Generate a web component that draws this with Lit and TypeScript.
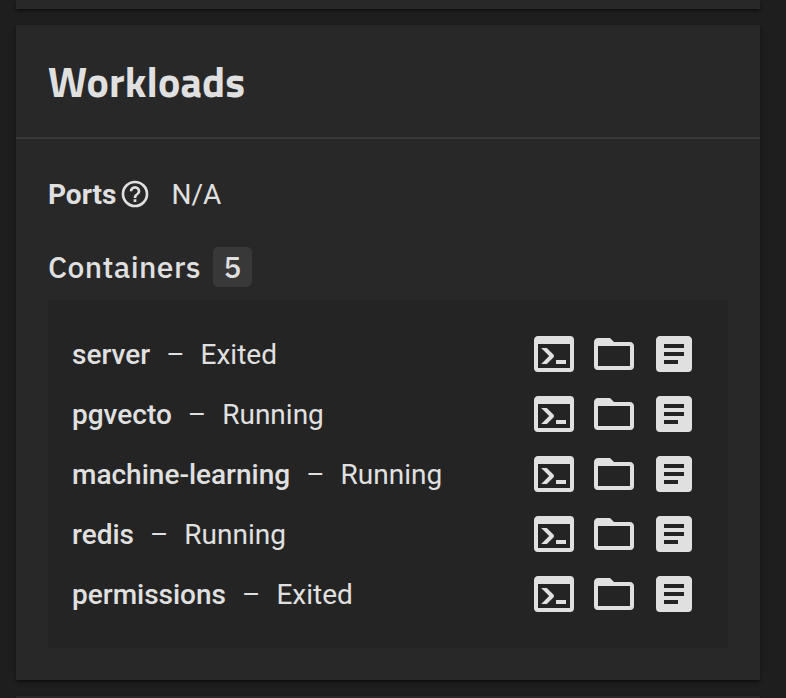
import { LitElement, html, css, svg } from "lit";
import { customElement, property } from "lit/decorators.js";

const ICONS: Record<string, string> = {
  shell:
    "M20,19V7H4V19H20M20,3A2,2 0 0,1 22,5V19A2,2 0 0,1 20,21H4A2,2 0 0,1 2,19V5C2,3.89 2.9,3 4,3H20M13,17V15H18V17H13M9.58,13L5.57,9H8.4L11.7,12.3C12.09,12.69 12.09,13.33 11.7,13.72L8.42,17H5.59L9.58,13Z",
  folder:
    "M20,18H4V8H20M20,6H12L10,4H4C2.89,4 2,4.89 2,6V18A2,2 0 0,0 4,20H20A2,2 0 0,0 22,18V8C22,6.89 21.1,6 20,6Z",
  logs:
    "M14,17H7V15H14M17,13H7V11H17M17,9H7V7H17M19,3H5C3.89,3 3,3.89 3,5V19A2,2 0 0,0 5,21H19A2,2 0 0,0 21,19V5C21,3.89 20.1,3 19,3Z",
  help:
    "M11,18H13V16H11V18M12,2A10,10 0 0,0 2,12A10,10 0 0,0 12,22A10,10 0 0,0 22,12A10,10 0 0,0 12,2M12,20C7.59,20 4,16.41 4,12C4,7.59 7.59,4 12,4C16.41,4 20,7.59 20,12C20,16.41 16.41,20 12,20M12,6A4,4 0 0,0 8,10H10A2,2 0 0,1 12,8A2,2 0 0,1 14,10C14,12 11,11.75 11,15H13C13,12.75 16,12.5 16,10A4,4 0 0,0 12,6Z",
};

@customElement("app-icon")
export class AppIcon extends LitElement {
  @property() name = "shell";
  static styles = css`
    :host { display: block; width: 48px; height: 48px; flex: none; }
    svg { display: block; width: 100%; height: 100%; fill: currentColor; }
  `;
  render() {
    return html`<svg viewBox="0 0 24 24">${svg`<path d=${ICONS[this.name]} />`}</svg>`;
  }
}

const CONTAINERS = [
  { name: "server", state: "Exited" },
  { name: "pgvecto", state: "Running" },
  { name: "machine-learning", state: "Running" },
  { name: "redis", state: "Running" },
  { name: "permissions", state: "Exited" },
];

@customElement("app-root")
export class AppRoot extends LitElement {
  static styles = css`
    :host {
      display: flex;
      flex-direction: column;
      gap: 16px;
      box-sizing: border-box;
      height: 698px;
      padding: 0 26px 0 16px;
      overflow: hidden;
      background: #1e1e1e;
      color: #e0e0e0;
      font: 28px/32px Roboto, sans-serif;
    }
    .card {
      flex: none;
      background: #282828;
      box-shadow: 0 2px 3px -1px rgba(0, 0, 0, 0.55), 0 2px 4px rgba(0, 0, 0, 0.18);
    }
    .previous { height: 9px; }
    .next { height: 40px; }
    .workloads { height: 655px; }
    .header {
      box-sizing: border-box;
      height: 114px;
      padding: 0 32px;
      display: flex;
      align-items: center;
      border-bottom: 2px solid #383838;
    }
    h3 {
      margin: 0;
      font: 700 42px/48px "Titillium Web", Roboto, sans-serif;
      letter-spacing: 0.15px;
    }
    .body { padding: 39px 32px 0; }
    .ports { display: flex; align-items: center; height: 32px; }
    .ports strong { font-weight: 700; }
    .ports app-icon { width: 32px; height: 32px; margin: 0 20px 0 3px; }
    .ports strong, .ports span, .row > span { padding-top: 2px; }
    .title {
      display: flex;
      align-items: center;
      height: 40px;
      margin: 37px 0 13px;
      font: 500 30px/40px "IBM Plex Sans", Roboto, sans-serif;
    }
    .label { width: 165px; letter-spacing: 0.4px; }
    .count {
      box-sizing: border-box;
      width: 39px;
      height: 40px;
      text-align: center;
      border-radius: 5px;
      background: #383838;
    }
    .list {
      box-sizing: border-box;
      width: 680px;
      height: 348px;
      padding: 24px;
      background: #242424;
    }
    .row {
      display: flex;
      align-items: center;
      height: 60px;
    }
    .name { font-weight: 500; }
    .dash { margin: 0 16px; }
    .actions { display: flex; gap: 12px; margin-left: auto; margin-right: 6px; }
  `;

  render() {
    return html`
      <div class="card previous"></div>
      <section class="card workloads">
        <div class="header"><h3>Workloads</h3></div>
        <div class="body">
          <div class="ports">
            <strong>Ports</strong><app-icon name="help"></app-icon><span>N/A</span>
          </div>
          <div class="title"><span class="label">Containers</span><span class="count">5</span></div>
          <div class="list">
            ${CONTAINERS.map(
              (c) => html`<div class="row">
                <span class="name">${c.name}</span><span class="dash">–</span><span>${c.state}</span>
                <div class="actions">
                  <app-icon name="shell"></app-icon>
                  <app-icon name="folder"></app-icon>
                  <app-icon name="logs"></app-icon>
                </div>
              </div>`
            )}
          </div>
        </div>
      </section>
      <div class="card next"></div>
    `;
  }
}
